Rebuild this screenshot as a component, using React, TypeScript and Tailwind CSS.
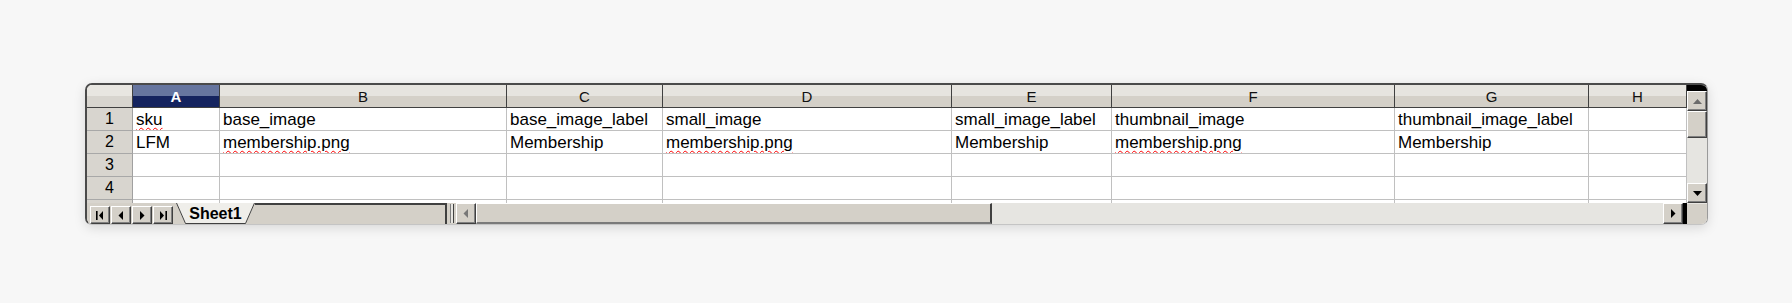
import React from "react";

const cols = [
  { l: "A", w: "w-[87px]" },
  { l: "B", w: "w-[287px]" },
  { l: "C", w: "w-[156px]" },
  { l: "D", w: "w-[289px]" },
  { l: "E", w: "w-[160px]" },
  { l: "F", w: "w-[283px]" },
  { l: "G", w: "w-[194px]" },
  { l: "H", w: "w-[98px]" },
];

const data: string[][] = [
  ["sku", "base_image", "base_image_label", "small_image", "small_image_label", "thumbnail_image", "thumbnail_image_label", ""],
  ["LFM", "membership.png", "Membership", "membership.png", "Membership", "membership.png", "Membership", ""],
  ["", "", "", "", "", "", "", ""],
  ["", "", "", "", "", "", "", ""],
];

const misspelled = new Set(["0-0", "1-1", "1-3", "1-5"]);

const bevel =
  "bg-[#d4d0c8] border border-t-white border-l-white border-r-[#404040] border-b-[#404040] shadow-[inset_-1px_-1px_0_#808080] flex items-center justify-center";

function Tri({ dir, color = "#000", bar }: { dir: "l" | "r" | "u" | "d"; color?: string; bar?: "l" | "r" }) {
  if (dir === "u")
    return (
      <svg width="9" height="5" viewBox="0 0 9 5">
        <polygon points="0,5 9,5 4.5,0" fill={color} />
      </svg>
    );
  if (dir === "d")
    return (
      <svg width="9" height="5" viewBox="0 0 9 5">
        <polygon points="0,0 9,0 4.5,5" fill={color} />
      </svg>
    );
  return (
    <svg width="8" height="9" viewBox="0 0 8 9">
      {dir === "l" ? (
        <polygon points={bar === "l" ? "7,0 7,9 3,4.5" : "6,0 6,9 1.5,4.5"} fill={color} />
      ) : (
        <polygon points={bar === "r" ? "1,0 1,9 5,4.5" : "2,0 2,9 6.5,4.5"} fill={color} />
      )}
      {bar === "l" && <rect x="0" y="0" width="1.6" height="9" fill={color} />}
      {bar === "r" && <rect x="6.4" y="0" width="1.6" height="9" fill={color} />}
    </svg>
  );
}

export default function App() {
  return (
    <div className="w-full h-[303px] overflow-hidden bg-[#f7f7f7] pt-[83px] pl-[85px] font-['Liberation_Sans',Arial,sans-serif] text-black">
      <div className="w-[1623px] h-[142px] rounded-[7px] overflow-hidden border-t-2 border-l-2 border-r border-b border-t-[#4a4a4a] border-l-[#4a4a4a] border-r-[#9a9a9a] border-b-[#c4c4c4] bg-white flex flex-col shadow-[0_3px_12px_rgba(0,0,0,0.13)]">
        {/* grid + vertical scrollbar */}
        <div className="flex h-[118px]">
          <div className="flex flex-col w-[1600px]">
            {/* header row */}
            <div className="flex h-[23px] border-b border-[#404040]">
              <div className="w-[46px] h-full border-r border-[#404040] bg-[linear-gradient(to_bottom,#e8e6e1_50%,#d8d5cf_50%)]" />
              {cols.map((c, i) => (
                <div
                  key={c.l}
                  className={`${c.w} h-full border-r border-[#404040] flex items-center justify-center text-[15px] leading-none ${
                    i === 0
                      ? "bg-[linear-gradient(to_bottom,#66759f_50%,#14235f_50%)] text-white font-bold"
                      : "bg-[linear-gradient(to_bottom,#e6e4df_50%,#d4d0c8_50%)] text-[#111]"
                  }`}
                >
                  {c.l}
                </div>
              ))}
            </div>
            {/* data rows */}
            {data.map((row, r) => (
              <div key={r} className="flex h-[23px]">
                <div className="w-[46px] h-full border-r border-b border-r-[#a0a0a0] border-b-[#a8a8a8] bg-[#d8d5cf] flex items-center justify-center text-[16px] leading-none">
                  {r + 1}
                </div>
                {cols.map((c, ci) => (
                  <div
                    key={c.l}
                    className={`${c.w} h-full border-r border-b border-[#c0c0c0] flex items-center pl-[3px] text-[17px] leading-none whitespace-nowrap overflow-hidden`}
                  >
                    {row[ci] && (
                      <span
                        className={
                          misspelled.has(`${r}-${ci}`)
                            ? "underline decoration-wavy decoration-[#ff0000] decoration-1 underline-offset-[2px]"
                            : ""
                        }
                      >
                        {row[ci]}
                      </span>
                    )}
                  </div>
                ))}
              </div>
            ))}
            {/* partial row */}
            <div className="flex h-[3px]">
              <div className="w-[46px] h-full border-r border-[#a0a0a0] bg-[#d8d5cf]" />
              {cols.map((c) => (
                <div key={c.l} className={`${c.w} h-full border-r border-[#c0c0c0]`} />
              ))}
            </div>
          </div>
          {/* vertical scrollbar */}
          <div className="w-[20px] h-full flex flex-col bg-[#e6e5e1]">
            <div className="h-[6px] bg-black" />
            <div className={`h-[20px] ${bevel}`}>
              <Tri dir="u" color="#6b6b6b" />
            </div>
            <div className={`h-[27px] ${bevel}`} />
            <div className="flex-1" />
            <div className={`h-[20px] ${bevel}`}>
              <Tri dir="d" />
            </div>
          </div>
        </div>
        {/* bottom bar */}
        <div className="flex h-[21px] bg-[#d4d0c8]">
          <div className="flex items-end pl-[3px] gap-[1px] h-full">
            <div className={`w-[20px] h-[18px] ${bevel}`}>
              <Tri dir="l" bar="l" />
            </div>
            <div className={`w-[20px] h-[18px] ${bevel}`}>
              <Tri dir="l" />
            </div>
            <div className={`w-[20px] h-[18px] ${bevel}`}>
              <Tri dir="r" />
            </div>
            <div className={`w-[20px] h-[18px] ${bevel}`}>
              <Tri dir="r" bar="r" />
            </div>
          </div>
          {/* sheet tab */}
          <div className="relative ml-[3px] w-[79px] h-full flex items-center justify-center">
            <svg className="absolute inset-0" width="79" height="21" viewBox="0 0 79 21">
              <polygon points="0,0 9,20 70,20 79,0" fill="#efeeea" />
              <polyline points="0.5,0 9.5,20.5 69.5,20.5 78.5,0" fill="none" stroke="#404040" strokeWidth="1" />
            </svg>
            <span className="relative text-[16px] font-bold leading-none pt-[1px]">Sheet1</span>
          </div>
          {/* rest of tab area */}
          <div className="w-[192px] h-full border-t-2 border-r-2 border-[#404040]" />
          {/* splitter */}
          <div className="w-[9px] h-full flex items-stretch justify-center py-[1px]">
            <div className="w-[4px] border-l border-r border-l-[#808080] border-r-[#404040] bg-[#e6e5e1]" />
          </div>
          {/* horizontal scrollbar */}
          <div className="flex-1 flex h-full bg-[#e6e5e1]">
            <div className={`w-[20px] h-full ${bevel}`}>
              <Tri dir="l" color="#777" />
            </div>
            <div className="w-[516px] h-full bg-[#d4d0c8] border-t border-l border-t-white border-l-white border-r-2 border-b-2 border-r-[#404040] border-b-[#7a7a7a]" />
            <div className="flex-1" />
            <div className={`w-[20px] h-full ${bevel}`}>
              <Tri dir="r" />
            </div>
            <div className="w-[4px] h-full bg-black" />
            <div className="w-[20px] h-full bg-[#d4d0c8] border-t border-t-[#e8e6e2]" />
          </div>
        </div>
      </div>
    </div>
  );
}
